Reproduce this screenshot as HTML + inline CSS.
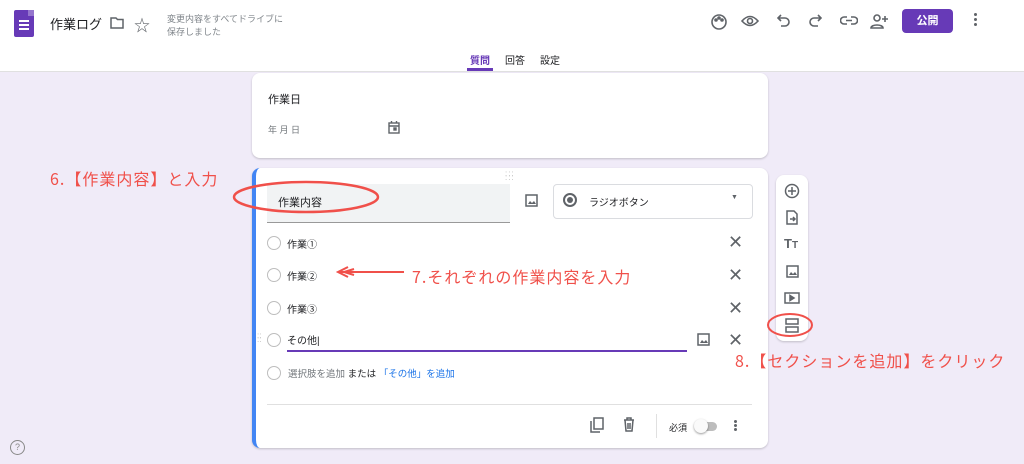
<!DOCTYPE html>
<html><head><meta charset="utf-8"><style>
body{margin:0;width:1024px;height:464px;background:#f0ebf8;font-family:"Liberation Sans","Noto Sans CJK JP",sans-serif;position:relative;overflow:hidden;color:#202124}
.a{position:absolute}
.hdr{left:0;top:0;width:1024px;height:71px;background:#fff;border-bottom:1px solid #e0e0e0}
.card{background:#fff;border-radius:8px;box-shadow:0 1px 2px rgba(0,0,0,.2)}
.rad{width:14px;height:14px;border:1.5px solid #bdbdbd;border-radius:50%;box-sizing:border-box}
.x{font-size:18px;color:#5f6368}
.red{color:#f0504a;font-family:"Noto Sans CJK JP",sans-serif;font-size:16px;letter-spacing:1px}
svg{position:absolute}
</style></head><body>
<div class="a hdr"></div>
<div class="a" style="left:14px;top:10px;width:20px;height:27px;background:#673ab7;border-radius:2px"></div>
<div class="a" style="left:28px;top:10px;width:6px;height:6px;background:#9575cd"></div>
<div class="a" style="left:19px;top:20px;width:10px;height:2px;background:#fff;box-shadow:0 4px 0 #fff,0 8px 0 #fff"></div>
<div class="a" style="left:50px;top:14px;font-size:13px">作業ログ</div>
<svg style="left:110px;top:17px" width="14" height="12"><path d="M1 1h5l1.5 1.5H13V11H1z" fill="none" stroke="#5f6368" stroke-width="1.5"/></svg>
<div class="a" style="left:134px;top:12px;font-size:16px;color:#5f6368">☆</div>
<div class="a" style="left:167px;top:13px;font-size:9px;color:#80868b;line-height:13px">変更内容をすべてドライブに<br>保存しました</div>
<svg style="left:710px;top:13px" width="18" height="18" fill="none" stroke="#5f6368" stroke-width="1.6"><circle cx="9" cy="9" r="7"/><circle cx="6" cy="7" r="1" fill="#5f6368"/><circle cx="9" cy="5" r="1" fill="#5f6368"/><circle cx="12" cy="7" r="1" fill="#5f6368"/></svg>
<svg style="left:741px;top:14px" width="18" height="14" fill="none" stroke="#5f6368" stroke-width="1.6"><path d="M1 7Q9-2 17 7Q9 16 1 7z"/><circle cx="9" cy="7" r="2.5"/></svg>
<svg style="left:777px;top:14px" width="14" height="14" fill="none" stroke="#5f6368" stroke-width="1.6"><path d="M4 1L1 4l3 3M1 4h7a4 4 0 010 8H4"/></svg>
<svg style="left:808px;top:14px" width="14" height="14" fill="none" stroke="#5f6368" stroke-width="1.6"><path d="M10 1l3 3-3 3M13 4H6a4 4 0 000 8h4"/></svg>
<svg style="left:840px;top:15px" width="18" height="12" fill="none" stroke="#5f6368" stroke-width="1.6"><path d="M7 2H4a3.5 3.5 0 000 7h3M11 2h3a3.5 3.5 0 010 7h-3M6 5.5h6"/></svg>
<svg style="left:870px;top:13px" width="18" height="16" fill="none" stroke="#5f6368" stroke-width="1.6"><circle cx="7" cy="5" r="3"/><path d="M1 15c0-4 12-4 12 0zM15 3v6M12 6h6"/></svg>
<div class="a" style="left:902px;top:9px;width:51px;height:24px;background:#673ab7;border-radius:4px;color:#fff;font-size:11px;font-weight:bold;text-align:center;line-height:24px">公開</div>
<div class="a" style="left:974px;top:13px;width:3px;height:3px;background:#5f6368;border-radius:50%;box-shadow:0 5px 0 #5f6368,0 10px 0 #5f6368"></div>
<div class="a" style="left:470px;top:52px;font-size:10px;color:#673ab7;font-weight:bold">質問</div>
<div class="a" style="left:467px;top:68px;width:26px;height:3px;background:#673ab7"></div>
<div class="a" style="left:505px;top:52px;font-size:10px;color:#202124">回答</div>
<div class="a" style="left:540px;top:52px;font-size:10px;color:#202124">設定</div>
<div class="a card" style="left:252px;top:73px;width:516px;height:85px"></div>
<div class="a" style="left:268px;top:91px;font-size:11px">作業日</div>
<div class="a" style="left:268px;top:123px;font-size:9px;color:#70757a">年 月 日</div>
<svg style="left:388px;top:121px" width="12" height="13" fill="none" stroke="#5f6368" stroke-width="1.4"><rect x="1" y="2" width="10" height="10"/><path d="M1 5h10M3.5 0v2.5M8.5 0v2.5"/><rect x="6" y="7" width="2" height="2" fill="#5f6368"/></svg>
<div class="a card" style="left:252px;top:168px;width:516px;height:280px;border-left:4px solid #4285f4;box-sizing:border-box"></div>
<div class="a" style="left:505px;top:172px;font-size:8px;color:#bbb;letter-spacing:1px;line-height:4px">:::<br>:::</div>
<div class="a" style="left:267px;top:184px;width:243px;height:38px;background:#f1f3f4;border-bottom:1px solid #999"></div>
<div class="a" style="left:278px;top:194px;font-size:11px">作業内容</div>
<svg style="left:525px;top:194px" width="13" height="13"><rect x="1" y="1" width="11" height="11" fill="none" stroke="#5f6368" stroke-width="1.5"/><path d="M3 10l2-3 2 2 2-2 2 3z" fill="#5f6368"/></svg>
<div class="a" style="left:553px;top:184px;width:198px;height:33px;border:1px solid #dadce0;border-radius:4px"></div>
<div class="a" style="left:563px;top:193px;width:14px;height:14px;border:2px solid #5f6368;border-radius:50%;box-sizing:border-box"></div>
<div class="a" style="left:567px;top:197px;width:6px;height:6px;background:#5f6368;border-radius:50%"></div>
<div class="a" style="left:589px;top:194px;font-size:10px">ラジオボタン</div>
<div class="a" style="left:731px;top:194px;font-size:7px;color:#5f6368">▼</div>
<div class="a rad" style="left:267px;top:236px"></div><div class="a" style="left:287px;top:236px;font-size:10px">作業①</div><div class="a x" style="left:728px;top:232px">✕</div>
<div class="a rad" style="left:267px;top:268px"></div><div class="a" style="left:287px;top:268px;font-size:10px">作業②</div><div class="a x" style="left:728px;top:265px">✕</div>
<div class="a rad" style="left:267px;top:301px"></div><div class="a" style="left:287px;top:301px;font-size:10px">作業③</div><div class="a x" style="left:728px;top:298px">✕</div>
<div class="a" style="left:257px;top:334px;font-size:8px;color:#bbb;line-height:4px">::<br>::</div>
<div class="a rad" style="left:267px;top:333px"></div><div class="a" style="left:287px;top:332px;font-size:10px">その他|</div>
<div class="a" style="left:287px;top:350px;width:400px;height:2px;background:#673ab7"></div>
<svg style="left:697px;top:333px" width="13" height="13"><rect x="1" y="1" width="11" height="11" fill="none" stroke="#5f6368" stroke-width="1.5"/><path d="M3 10l2-3 2 2 2-2 2 3z" fill="#5f6368"/></svg>
<div class="a x" style="left:728px;top:330px">✕</div>
<div class="a rad" style="left:267px;top:366px"></div>
<div class="a" style="left:288px;top:366px;font-size:9.5px;color:#70757a">選択肢を追加 <span style="color:#202124">または</span> <span style="color:#1a73e8">「その他」を追加</span></div>
<div class="a" style="left:267px;top:404px;width:485px;height:1px;background:#e0e0e0"></div>
<svg style="left:590px;top:417px" width="14" height="16" fill="none" stroke="#5f6368" stroke-width="1.5"><rect x="4" y="1" width="9" height="11"/><path d="M1 4v11h9"/></svg>
<svg style="left:623px;top:417px" width="12" height="15" fill="none" stroke="#5f6368" stroke-width="1.5"><path d="M1 3h10M4 3V1h4v2M2 3l1 11h6l1-11M5 6v6M7 6v6"/></svg>
<div class="a" style="left:656px;top:414px;width:1px;height:24px;background:#e0e0e0"></div>
<div class="a" style="left:669px;top:421px;font-size:9px">必須</div>
<div class="a" style="left:697px;top:422px;width:20px;height:9px;background:#bdbdbd;border-radius:5px"></div>
<div class="a" style="left:694px;top:419px;width:14px;height:14px;background:#fafafa;border-radius:50%;box-shadow:0 1px 2px rgba(0,0,0,.4)"></div>
<div class="a" style="left:734px;top:420px;width:3px;height:3px;background:#5f6368;border-radius:50%;box-shadow:0 4px 0 #5f6368,0 8px 0 #5f6368"></div>
<div class="a card" style="left:776px;top:175px;width:32px;height:166px"></div>
<svg style="left:784px;top:183px" width="16" height="16" fill="none" stroke="#5f6368" stroke-width="1.5"><circle cx="8" cy="8" r="6.5"/><path d="M8 4v8M4 8h8"/></svg>
<svg style="left:786px;top:210px" width="12" height="15" fill="none" stroke="#5f6368" stroke-width="1.5"><path d="M1 1h7l3 3v10H1z"/><path d="M4 9h5M7 7l2 2-2 2"/></svg>
<div class="a" style="left:784px;top:236px;font-size:13px;font-weight:bold;color:#5f6368">T<span style="font-size:10px">T</span></div>
<svg style="left:786px;top:265px" width="13" height="13"><rect x="1" y="1" width="11" height="11" fill="none" stroke="#5f6368" stroke-width="1.5"/><path d="M3 10l2-3 2 2 2-2 2 3z" fill="#5f6368"/></svg>
<svg style="left:784px;top:292px" width="16" height="12" fill="none" stroke="#5f6368" stroke-width="1.5"><rect x="1" y="1" width="14" height="10"/><path d="M6 3.5v5l4-2.5z" fill="#5f6368"/></svg>
<svg style="left:785px;top:318px" width="14" height="15" fill="none" stroke="#5f6368" stroke-width="1.5"><rect x="1" y="1" width="12" height="5"/><rect x="1" y="9" width="12" height="5"/></svg>
<div class="a red" style="left:50px;top:166px">6.【作業内容】と入力</div>
<svg style="left:228px;top:176px" width="160" height="42" fill="none" stroke="#f0504a" stroke-width="2.5"><ellipse cx="78" cy="21" rx="72" ry="15"/></svg>
<svg style="left:336px;top:265px" width="70" height="14" fill="none" stroke="#f0504a" stroke-width="2"><path d="M2 7h66M12 2L2 7l10 5M18 4L8 7l10 3"/></svg>
<div class="a red" style="left:412px;top:264px">7.それぞれの作業内容を入力</div>
<svg style="left:764px;top:310px" width="52" height="30" fill="none" stroke="#f0504a" stroke-width="2"><ellipse cx="26" cy="15" rx="22" ry="11"/></svg>
<div class="a red" style="left:735px;top:348px">8.【セクションを追加】をクリック</div>
<div class="a" style="left:10px;top:440px;width:13px;height:13px;border:1.5px solid #888;border-radius:50%;font-size:9px;color:#888;text-align:center;line-height:13px">?</div>
</body></html>
